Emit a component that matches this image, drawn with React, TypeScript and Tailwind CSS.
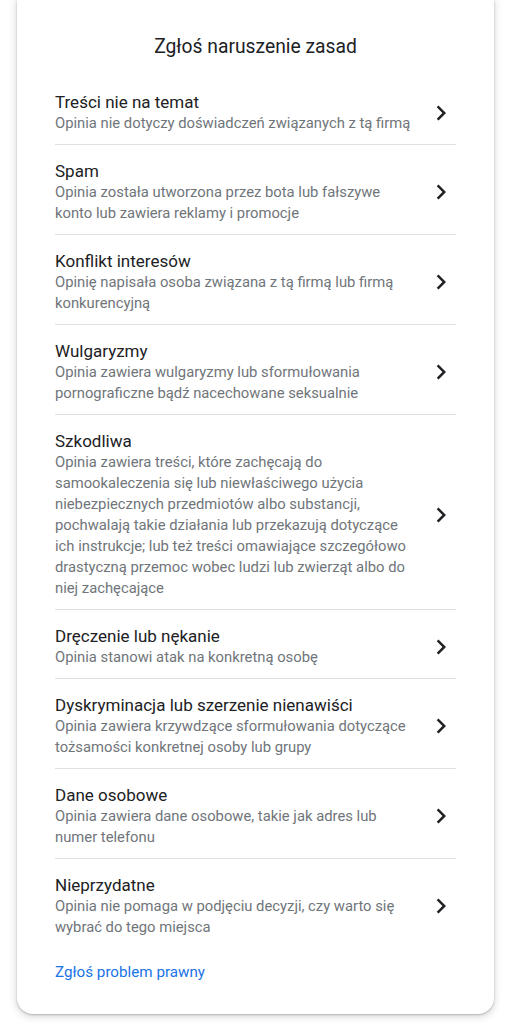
import React from "react";

const items: { title: string; desc: string }[] = [
  { title: "Treści nie na temat", desc: "Opinia nie dotyczy doświadczeń związanych z tą firmą" },
  { title: "Spam", desc: "Opinia została utworzona przez bota lub fałszywe konto lub zawiera reklamy i promocje" },
  { title: "Konflikt interesów", desc: "Opinię napisała osoba związana z tą firmą lub firmą konkurencyjną" },
  { title: "Wulgaryzmy", desc: "Opinia zawiera wulgaryzmy lub sformułowania pornograficzne bądź nacechowane seksualnie" },
  {
    title: "Szkodliwa",
    desc: "Opinia zawiera treści, które zachęcają do samookaleczenia się lub niewłaściwego użycia niebezpiecznych przedmiotów albo substancji, pochwalają takie działania lub przekazują dotyczące ich instrukcje; lub też treści omawiające szczegółowo drastyczną przemoc wobec ludzi lub zwierząt albo do niej zachęcające",
  },
  { title: "Dręczenie lub nękanie", desc: "Opinia stanowi atak na konkretną osobę" },
  { title: "Dyskryminacja lub szerzenie nienawiści", desc: "Opinia zawiera krzywdzące sformułowania dotyczące tożsamości konkretnej osoby lub grupy" },
  { title: "Dane osobowe", desc: "Opinia zawiera dane osobowe, takie jak adres lub numer telefonu" },
  { title: "Nieprzydatne", desc: "Opinia nie pomaga w podjęciu decyzji, czy warto się wybrać do tego miejsca" },
];

function Chevron() {
  return (
    <svg width="30" height="30" viewBox="0 0 24 24" className="shrink-0 text-[#202124]" fill="currentColor">
      <path d="M10 6L8.59 7.41 13.17 12l-4.58 4.59L10 18l6-6z" />
    </svg>
  );
}

export default function App() {
  return (
    <div className="min-h-[1024px] bg-white font-['Roboto','Liberation_Sans',sans-serif]">
      <div className="mx-[17px] w-[477px] rounded-b-[16px] bg-white px-[38px] pb-[32px] pt-[35px] shadow-[0_1px_2px_rgba(60,64,67,0.3),0_2px_6px_2px_rgba(60,64,67,0.15)]">
        <h1 className="mb-[17px] text-center text-[19.3px] leading-[24px] text-[#202124]">Zgłoś naruszenie zasad</h1>
        <div className="flex flex-col">
          {items.map((it, i) => (
            <div
              key={it.title}
              className={
                "flex items-center gap-[12px] pb-[10px] pt-[15px] " +
                (i < items.length - 1 ? "border-b border-[#e0e0e0]" : "")
              }
            >
              <div className="min-w-0 flex-1">
                <div className="text-[17px] leading-[22px] text-[#202124]">{it.title}</div>
                <div className="text-[14.8px] leading-[21px] text-[#70757a]">{it.desc}</div>
              </div>
              <Chevron />
            </div>
          ))}
        </div>
        <div className="mt-[14px] text-[15.2px] leading-[20px] text-[#1a73e8]">Zgłoś problem prawny</div>
      </div>
    </div>
  );
}
